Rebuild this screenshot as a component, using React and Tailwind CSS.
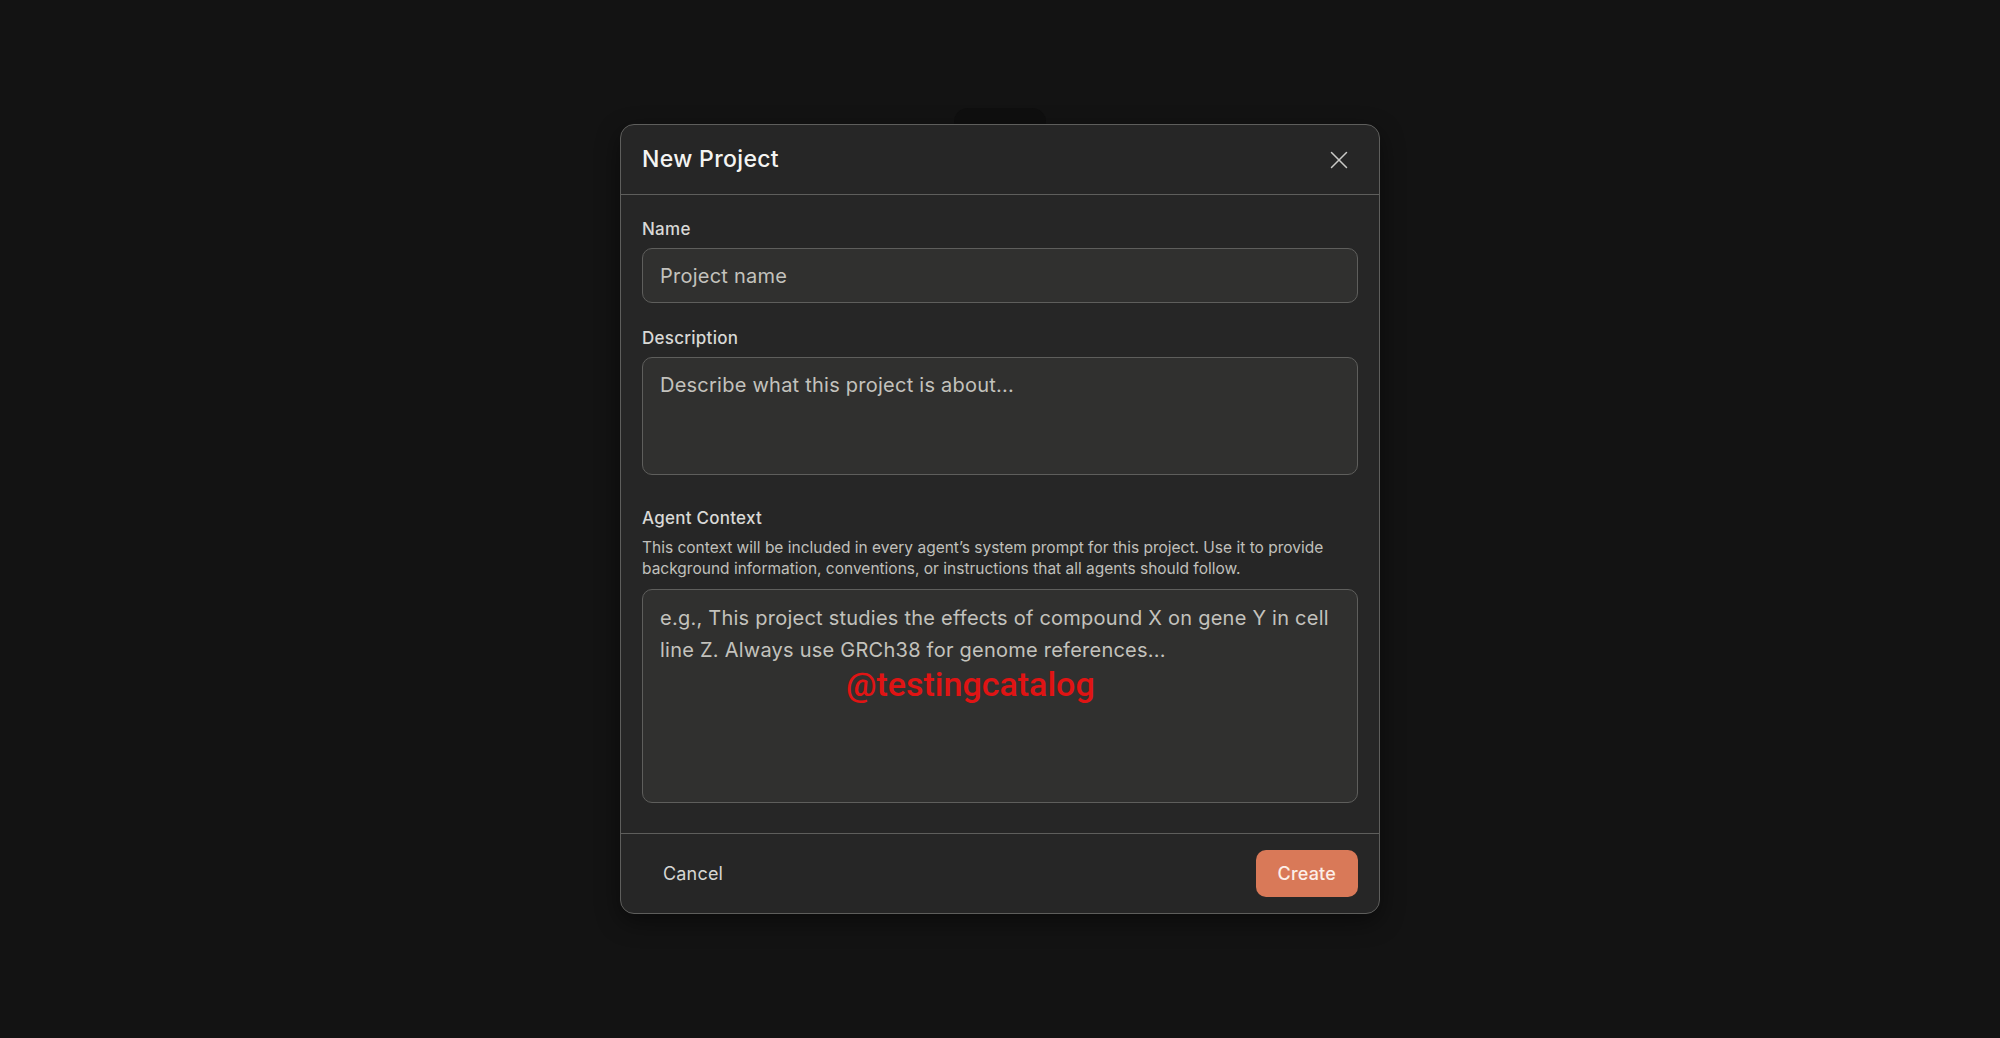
import { useState } from 'react';

function CloseIcon() {
  return (
    <svg width="18" height="18" viewBox="0 0 18 18" fill="none" stroke="currentColor" strokeWidth="1.5" strokeLinecap="round">
      <path d="M1.5 1.5 16.5 16.5" />
      <path d="M16.5 1.5 1.5 16.5" />
    </svg>
  );
}

function Label({ children }) {
  return (
    <label className="block text-[17px] leading-[24px] font-medium tracking-[0.015em] text-[#d9d9d6]">{children}</label>
  );
}

export default function App() {
  const [name, setName] = useState('');
  const [description, setDescription] = useState('');
  const [context, setContext] = useState('');

  const fieldClass =
    'w-full rounded-[10px] border border-[#5e5e5c] bg-[#30302f] text-[20px] tracking-[0.012em] text-[#e6e6e3] placeholder:text-[#c3c2bd] outline-none';

  return (
    <div className="h-screen bg-[#131313] flex justify-center font-['Inter',sans-serif]">
      <div className="relative mt-[124px] h-fit">
        {/* dim tab peeking out behind the dialog */}
        <div className="absolute left-[334px] -top-[16px] w-[92px] h-[24px] rounded-t-[14px] bg-[#0f0f0f]" />

        <div className="relative w-[760px] rounded-[14px] border border-[#5e5e5c] bg-[#262626] shadow-[0_8px_24px_rgba(0,0,0,0.45)]">
          {/* Header */}
          <div className="h-[70px] flex items-center justify-between pl-[21px] pr-[31px] border-b border-[#5e5e5c]">
            <h2 className="text-[23px] font-medium tracking-[0.015em] text-[#f4f4f2]">New Project</h2>
            <button className="text-[#c9c9c6]">
              <CloseIcon />
            </button>
          </div>

          {/* Body */}
          <div className="px-[21px] pt-[22px] pb-[30px]">
            <Label>Name</Label>
            <input
              value={name}
              onChange={(e) => setName(e.target.value)}
              placeholder="Project name"
              className={`${fieldClass} mt-[7px] h-[55px] px-[17px]`}
            />

            <div className="mt-[23px]">
              <Label>Description</Label>
              <textarea
                value={description}
                onChange={(e) => setDescription(e.target.value)}
                placeholder="Describe what this project is about..."
                className={`${fieldClass} mt-[7px] h-[118px] px-[17px] pt-[11px] leading-[32px] resize-none block`}
              />
            </div>

            <div className="mt-[31px]">
              <Label>Agent Context</Label>
              <p className="mt-[7px] text-[15.5px] leading-[21px] text-[#c0c0bc]">
                This context will be included in every agent’s system prompt for this project. Use it to provide background information, conventions, or instructions that all agents should follow.
              </p>
              <div className="relative mt-[10px]">
                <textarea
                  value={context}
                  onChange={(e) => setContext(e.target.value)}
                  placeholder="e.g., This project studies the effects of compound X on gene Y in cell line Z. Always use GRCh38 for genome references..."
                  className={`${fieldClass} h-[214px] px-[17px] pt-[12px] leading-[32px] resize-none block`}
                />
                <span className="pointer-events-none absolute left-[204px] top-[80px] font-['Roboto',sans-serif] text-[34px] leading-[30px] font-medium text-[#e01414]">
                  @testingcatalog
                </span>
              </div>
            </div>
          </div>

          {/* Footer */}
          <div className="h-[80px] flex items-center justify-between px-[21px] border-t border-[#5e5e5c]">
            <button className="px-[21px] h-[47px] text-[18px] tracking-[0.01em] text-[#d6d6d3]">Cancel</button>
            <button className="h-[47px] px-[22px] rounded-[10px] bg-[#d97958] text-[18px] font-medium tracking-[0.01em] text-[#fcefe9]">
              Create
            </button>
          </div>
        </div>
      </div>
    </div>
  );
}
